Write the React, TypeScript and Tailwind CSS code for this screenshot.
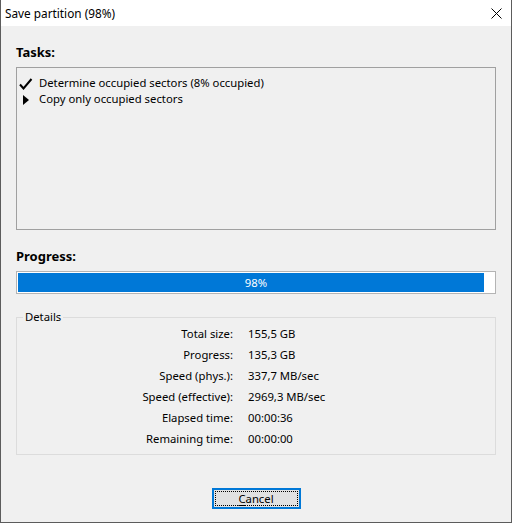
import React from "react";

const details: [string, string][] = [
  ["Total size:", "155,5 GB"],
  ["Progress:", "135,3 GB"],
  ["Speed (phys.):", "337,7 MB/sec"],
  ["Speed (effective):", "2969,3 MB/sec"],
  ["Elapsed time:", "00:00:36"],
  ["Remaining time:", "00:00:00"],
];

export default function App() {
  return (
    <div
      className="w-[512px] h-[523px] flex flex-col border-x border-b border-[#5c5c5c] bg-[#f0f0f0] text-[11.3px] text-black overflow-hidden"
      style={{ fontFamily: '"Noto Sans", "Open Sans", sans-serif' }}
    >
      {/* Title bar */}
      <div className="h-[26px] bg-white flex items-center justify-between pl-[4px] pr-[9px] shrink-0">
        <span className="leading-[16px] text-[11.8px] -mt-[1px]">Save partition (98%)</span>
        <svg width="11" height="11" viewBox="0 0 11 11" className="mt-[1px]">
          <path d="M0.5 0.5 L10.5 10.5 M10.5 0.5 L0.5 10.5" stroke="#000" strokeWidth="1" fill="none" />
        </svg>
      </div>

      {/* Body */}
      <div className="flex-1 flex flex-col px-[15px]">
        <div className="mt-[18px] h-[16px] leading-[16px] font-bold text-[13px]">Tasks:</div>

        <div className="mt-[7px] h-[163px] border border-[#a0a0a0] pt-[7px] pl-[1px]">
          <div className="flex items-center h-[16px]">
            <svg width="14" height="12" viewBox="0 0 14 12" className="ml-[1px] mr-[6px] mt-[1px]">
              <path d="M1 6.5 L4.5 10.5 L12.5 1" stroke="#000" strokeWidth="2" fill="none" />
            </svg>
            <span className="leading-[16px]">Determine occupied sectors (8% occupied)</span>
          </div>
          <div className="flex items-center h-[16px]">
            <svg width="14" height="12" viewBox="0 0 14 12" className="ml-[1px] mr-[6px] mt-[1px]">
              <path d="M4 1 L10 6 L4 11 Z" fill="#000" />
            </svg>
            <span className="leading-[16px]">Copy only occupied sectors</span>
          </div>
        </div>

        <div className="mt-[18px] h-[16px] leading-[16px] font-bold text-[13px]">Progress:</div>

        <div className="mt-[7px] h-[23px] border border-[#b4b4b4] bg-white p-[1px] flex">
          <div className="w-[466px] h-full bg-[#0078d7]" />
        </div>
        <div className="-mt-[23px] h-[23px] flex items-center justify-center text-white leading-[16px] relative">98%</div>

        {/* Details group */}
        <div className="relative mt-[23px] h-[138px] border border-[#dcdcdc] pt-[8px]">
          <span className="absolute -top-[9px] left-[6px] px-[2px] bg-[#f0f0f0] leading-[16px]">Details</span>
          <div className="flex flex-col gap-[5px]">
            {details.map(([k, v]) => (
              <div key={k} className="flex h-[16px] leading-[16px]">
                <span className="w-[216px] text-right">{k}</span>
                <span className="pl-[15px]">{v}</span>
              </div>
            ))}
          </div>
        </div>

        <div className="flex justify-center mt-[33px]">
          <button className="w-[89px] h-[21px] border-2 border-[#0078d7] bg-[#e1e1e1] p-[1px] flex">
            <span className="flex-1 border border-dotted border-black flex items-center justify-center leading-[14px]">
              <span>
                <span className="underline underline-offset-2">C</span>ancel
              </span>
            </span>
          </button>
        </div>
      </div>
    </div>
  );
}
